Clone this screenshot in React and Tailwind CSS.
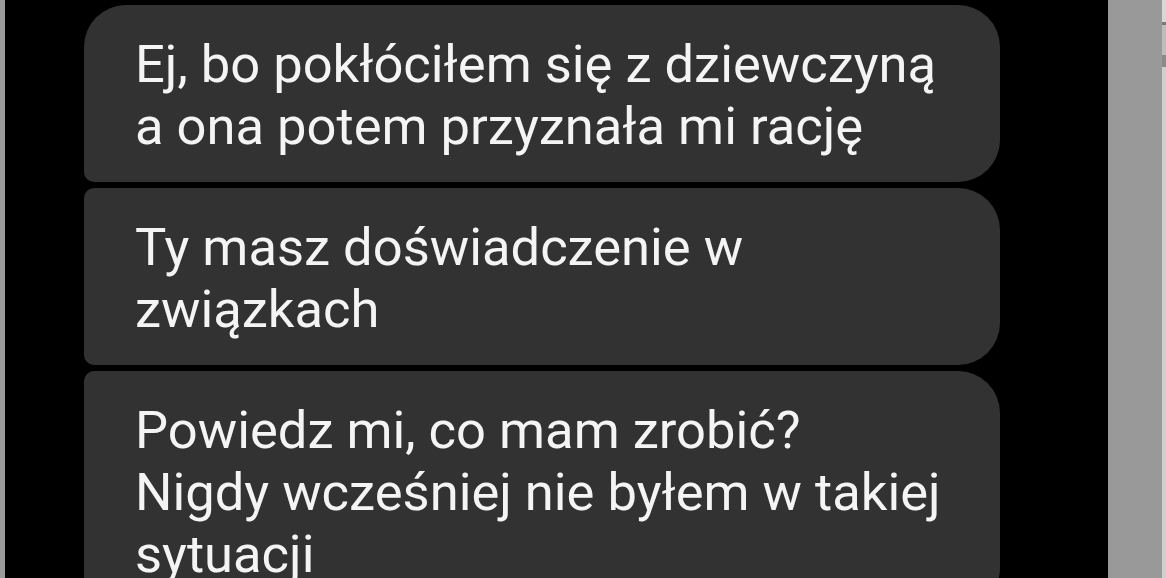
const messages = [
  { lines: ['Ej, bo pokłóciłem się z dziewczyną', 'a ona potem przyznała mi rację'], corners: 'rounded-tl-[42px] rounded-bl-[10px]' },
  { lines: ['Ty masz doświadczenie w', 'związkach'], corners: 'rounded-tl-[10px] rounded-bl-[10px]' },
  { lines: ['Powiedz mi, co mam zrobić?', 'Nigdy wcześniej nie byłem w takiej', 'sytuacji'], corners: 'rounded-tl-[10px] rounded-bl-[10px]' },
];

function Bubble({ lines, corners }) {
  return (
    <div className={`w-[916px] bg-[#323232] rounded-r-[42px] ${corners} pl-[51px] pr-[40px] pt-[28px] pb-[25px]`}>
      {lines.map((l, i) => (
        <p key={i} className="text-[52.5px] leading-[62px] text-[#f4f4f4] whitespace-nowrap">{l}</p>
      ))}
    </div>
  );
}

export default function App() {
  return (
    <div className="w-[1166px] h-[578px] flex overflow-hidden" style={{ fontFamily: 'Roboto, "Noto Sans", sans-serif' }}>
      <div className="w-[5px] bg-[#9a9a9a]" />
      <div className="flex-1 bg-black pl-[79px] pt-[5px] flex flex-col gap-[6px]">
        {messages.map((m, i) => (
          <Bubble key={i} lines={m.lines} corners={m.corners} />
        ))}
      </div>
      <div className="w-[54px] bg-[#999999]" />
      <div className="w-[4px] bg-[#c4c4c4] flex flex-col">
        <div className="h-[22px] bg-[#d8d8d8]" />
        <div className="h-[3px] bg-[#7a7a7a]" />
        <div className="h-[30px] bg-[#bdbdbd]" />
        <div className="h-[12px] bg-[#8a8a8a]" />
        <div className="flex-1 bg-[#cfcfcf]" />
      </div>
    </div>
  );
}
